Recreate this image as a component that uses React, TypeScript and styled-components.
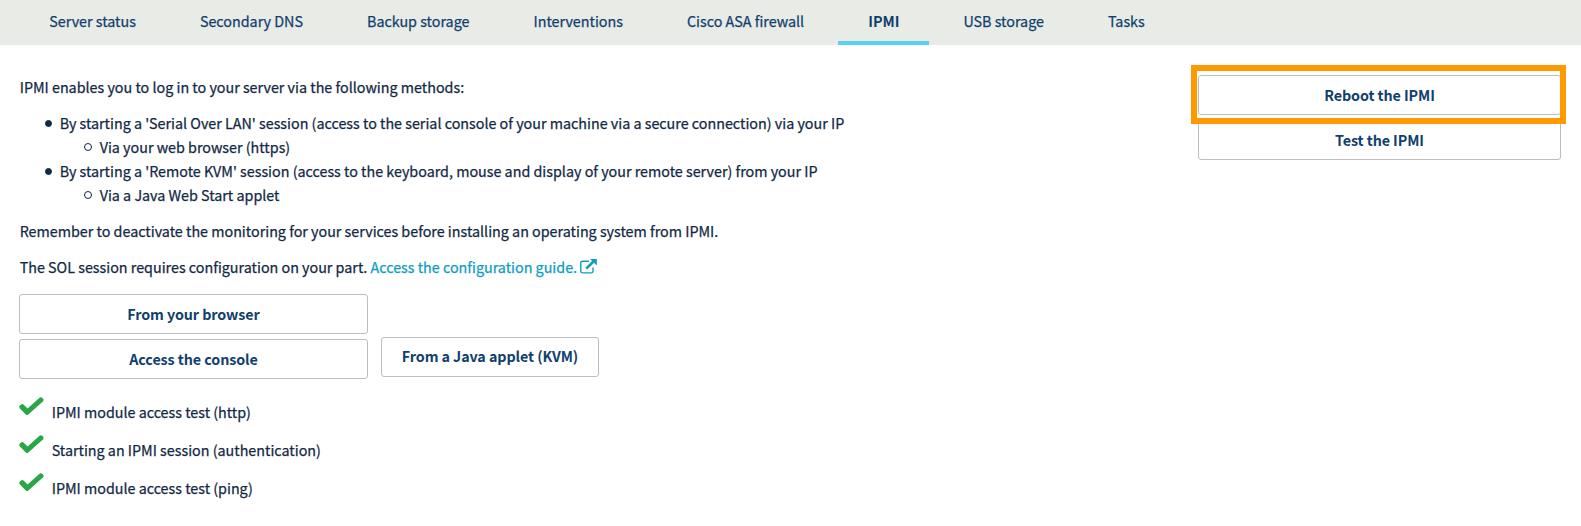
import React from "react";
import styled, { createGlobalStyle } from "styled-components";

const GlobalStyle = createGlobalStyle`
  *, *::before { box-sizing: border-box; }
  body {
    margin: 0;
    background: #fff;
    color: #122844;
    font-family: "Noto Sans CJK SC", "Noto Sans", sans-serif;
    font-size: 14.32px;
    line-height: 24px;
    -webkit-text-stroke: 0.25px currentColor;
  }
`;

const TabBar = styled.nav`
  display: flex;
  gap: 4px;
  height: 45px;
  padding-left: 19.3px;
  background: #e8ebe6;
`;

const Tab = styled.a<{ $active?: boolean }>`
  height: 45px;
  padding: 9px 30px 0;
  border-bottom: 4px solid ${(p) => (p.$active ? "#59d2ef" : "transparent")};
  color: #113f6d;
  font-weight: ${(p) => (p.$active ? 700 : 400)};
  -webkit-text-stroke-width: ${(p) => (p.$active ? 0 : 0.25)}px;
  white-space: nowrap;
`;

const Content = styled.main`
  display: flex;
  justify-content: space-between;
  padding: 30px 20px 0 19px;
`;

const Details = styled.section`
  width: 900px;
`;

const Paragraph = styled.p`
  margin: 0 0 12px;
  padding-left: 0.7px;
`;

const Methods = styled.ul`
  margin: 0 0 12px;
  padding: 0;
  list-style: none;
`;

const Method = styled.li<{ $nested?: boolean }>`
  display: flex;
  align-items: center;
  padding-left: ${(p) => (p.$nested ? 65 : 26)}px;
  height: 24px;
  white-space: nowrap;

  &::before {
    content: "";
    width: ${(p) => (p.$nested ? 8 : 7)}px;
    height: ${(p) => (p.$nested ? 8 : 7)}px;
    margin-right: 7.7px;
    border: 1px solid #122844;
    border-radius: 50%;
    background: ${(p) => (p.$nested ? "transparent" : "#122844")};
  }
`;

const GuideLink = styled.a`
  color: #0e9dc0;

  svg {
    margin-left: 3px;
    vertical-align: -1px;
  }
`;

const Actions = styled.div`
  display: flex;
  align-items: flex-end;
  gap: 13px;
  margin-top: 15px;
`;

const ButtonStack = styled.div<{ $width: number }>`
  display: flex;
  flex-direction: column;
  gap: 5px;
  width: ${(p) => p.$width}px;
`;

const Button = styled.button<{ $inline?: boolean }>`
  display: block;
  width: ${(p) => (p.$inline ? "218px" : "100%")};
  height: 40px;
  margin: 0 0 ${(p) => (p.$inline ? 2 : 0)}px;
  padding: 0 0 ${(p) => (p.$inline ? 2 : 0)}px;
  border: 1px solid #bbbdbf;
  border-radius: 3px;
  background: #fff;
  color: #113f6d;
  font: inherit;
  font-weight: 700;
  letter-spacing: -0.08px;
  -webkit-text-stroke-width: 0;
`;

const Highlight = styled.div`
  position: absolute;
  inset: -10px -5px -9px -7px;
  border: 6px solid #ff9900;
  pointer-events: none;
`;

const Highlighted = styled.div`
  position: relative;
`;

const Checks = styled.ul`
  margin: 18px 0 0;
  padding: 0;
  list-style: none;
`;

const Check = styled.li`
  display: flex;
  gap: 7.7px;
  height: 38px;

  svg { flex: none; }
  span { padding-top: 3px; }
`;

const tabs = [
  "Server status",
  "Secondary DNS",
  "Backup storage",
  "Interventions",
  "Cisco ASA firewall",
  "IPMI",
  "USB storage",
  "Tasks",
];

const results = [
  "IPMI module access test (http)",
  "Starting an IPMI session (authentication)",
  "IPMI module access test (ping)",
];

const ExternalIcon = () => (
  <svg width="17" height="15" viewBox="0 0 17 15" fill="none">
    <path d="M9 2.2H2.6Q0.8 2.2 0.8 3.8V12.2Q0.8 13.9 2.6 13.9H11.2Q13 13.9 13 12.2V8.5" stroke="currentColor" strokeWidth="1.4" />
    <path d="M6.2 9.6L13.2 2.8" stroke="currentColor" strokeWidth="2.6" />
    <path d="M10 0H16.8V6.6Z" fill="currentColor" />
  </svg>
);

const CheckIcon = () => (
  <svg width="25" height="19" viewBox="0 0 25 19" fill="none">
    <path
      d="M0.9 8.6Q2.8 6 5 7.9L8.6 11.5L20.5 0.7Q22 -0.4 23.5 1.1Q25.5 3 23.9 4.6L9.3 17.5Q8 18.6 6.8 17.5L0.7 11.2Q-0.3 10 0.9 8.6Z"
      fill="#29a746"
    />
  </svg>
);

export default function App() {
  return (
    <>
      <GlobalStyle />
      <TabBar>
        {tabs.map((name) => (
          <Tab key={name} $active={name === "IPMI"}>{name}</Tab>
        ))}
      </TabBar>
      <Content>
        <Details>
          <Paragraph>IPMI enables you to log in to your server via the following methods:</Paragraph>
          <Methods>
            <Method>By starting a 'Serial Over LAN' session (access to the serial console of your machine via a secure connection) via your IP</Method>
            <Method $nested>Via your web browser (https)</Method>
            <Method>By starting a 'Remote KVM' session (access to the keyboard, mouse and display of your remote server) from your IP</Method>
            <Method $nested>Via a Java Web Start applet</Method>
          </Methods>
          <Paragraph>Remember to deactivate the monitoring for your services before installing an operating system from IPMI.</Paragraph>
          <Paragraph>
            The SOL session requires configuration on your part.{" "}
            <GuideLink>Access the configuration guide.<ExternalIcon /></GuideLink>
          </Paragraph>
          <Actions>
            <ButtonStack $width={349}>
              <Button>From your browser</Button>
              <Button>Access the console</Button>
            </ButtonStack>
            <Button $inline>From a Java applet (KVM)</Button>
          </Actions>
          <Checks>
            {results.map((label) => (
              <Check key={label}><CheckIcon /><span>{label}</span></Check>
            ))}
          </Checks>
        </Details>
        <ButtonStack $width={363}>
          <Highlighted>
            <Button>Reboot the IPMI</Button>
            <Highlight />
          </Highlighted>
          <Button>Test the IPMI</Button>
        </ButtonStack>
      </Content>
    </>
  );
}
